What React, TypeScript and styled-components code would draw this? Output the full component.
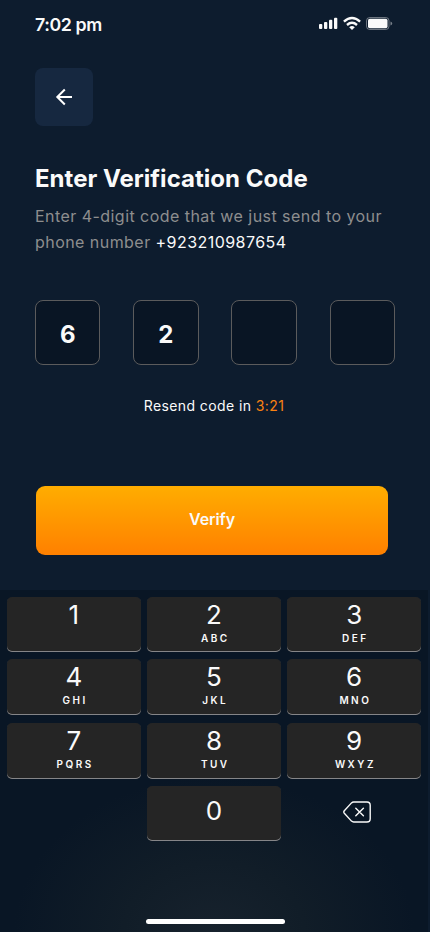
import React from 'react';
import styled, { createGlobalStyle } from 'styled-components';

const GlobalStyle = createGlobalStyle`
  * { box-sizing: border-box; }
  body { margin: 0; background: #0d1c2e; }
  button { font: inherit; color: inherit; border: 0; padding: 0; background: none; }
`;

const Screen = styled.main`
  display: flex;
  flex-direction: column;
  width: 430px;
  height: 932px;
  overflow: hidden;
  background: #0d1c2e;
  color: #fafafa;
  font-family: Inter, 'Liberation Sans', sans-serif;
`;

const StatusBar = styled.header`
  display: flex;
  justify-content: space-between;
  align-items: flex-start;
  height: 68px;
  padding: 13px 36px 0 35px;
`;

const Time = styled.time`
  font-size: 17.8px;
  line-height: 24px;
  font-weight: 600;
  letter-spacing: -0.4px;
`;

const StatusIcons = styled.svg`
  display: block;
  width: 75px;
  height: 15px;
  margin-top: 3px;
`;

const Content = styled.section`
  display: flex;
  flex-direction: column;
  height: 522px;
  padding: 0 35px;
`;

const BackButton = styled.button`
  display: grid;
  place-items: center;
  width: 58px;
  height: 58px;
  border-radius: 8px;
  background: #162840;
`;

const Title = styled.h1`
  margin: 38px 0 0;
  font-size: 24px;
  line-height: 30px;
  font-weight: 700;
  letter-spacing: 0.03px;
  white-space: nowrap;
`;

const Description = styled.p`
  margin: 9px -10px 0 0;
  font-size: 16px;
  line-height: 26px;
  font-weight: 400;
  letter-spacing: 0.45px;
  color: #8e8e8e;
`;

const Phone = styled.span`
  color: #fafafa;
`;

const CodeRow = styled.div`
  display: flex;
  justify-content: space-between;
  width: 360px;
  margin-top: 45px;
`;

const CodeCell = styled.div`
  display: grid;
  place-items: center;
  width: 65.4px;
  height: 65.4px;
  padding-top: 4px;
  border: 1px solid #5b5b5c;
  border-radius: 8px;
  background: #091524;
  font-size: 24px;
  line-height: 30px;
  font-weight: 700;
`;

const Resend = styled.p`
  margin: 30.6px 0 0 -2px;
  font-size: 14px;
  line-height: 20px;
  font-weight: 400;
  text-align: center;
  letter-spacing: 0.4px;
`;

const Countdown = styled.span`
  color: #f98112;
`;

const VerifyButton = styled.button`
  width: 352px;
  height: 69px;
  margin: 70px 0 0 1px;
  padding-bottom: 2px;
  border-radius: 9px;
  background: linear-gradient(#ffad00, #ff8000);
  font-size: 16px;
  font-weight: 600;
  letter-spacing: -0.1px;
`;

const Keyboard = styled.section`
  display: flex;
  flex-direction: column;
  justify-content: space-between;
  align-items: center;
  width: 428px;
  height: 342px;
  padding: 7px 7px 8px;
  background: radial-gradient(ellipse 200px 155px at 50% 100%, #17222d 0%, #111d28 45%, #091625 100%);
`;

const KeyGrid = styled.div`
  display: grid;
  grid-template-columns: repeat(3, 133.7px);
  grid-template-rows: 55px 56px 56px 55px;
  justify-content: space-between;
  row-gap: 7.3px;
  width: 414px;
`;

const Key = styled.button<{ $centered?: boolean }>`
  display: flex;
  flex-direction: column;
  align-items: center;
  padding-top: ${({ $centered }) => ($centered ? 9 : 2)}px;
  border-radius: 5px;
  background: #252525;
  box-shadow: inset 0 -1px 0 #858588;
`;

const Digit = styled.span`
  font-size: 26px;
  line-height: 31px;
  font-weight: 400;
`;

const Letters = styled.span`
  margin-top: 2px;
  font-size: 10px;
  line-height: 12px;
  font-weight: 600;
  letter-spacing: 2.5px;
  padding-left: 2.5px;
`;

const DeleteKey = styled.button`
  grid-column: 3;
  display: grid;
  place-items: center;
  padding: 0 0 3px 6px;
`;

const HomeIndicator = styled.div`
  width: 139px;
  height: 5px;
  margin-left: 3px;
  border-radius: 3px;
  background: #fff;
`;

const keys = [
  { digit: '1', letters: '' },
  { digit: '2', letters: 'ABC' },
  { digit: '3', letters: 'DEF' },
  { digit: '4', letters: 'GHI' },
  { digit: '5', letters: 'JKL' },
  { digit: '6', letters: 'MNO' },
  { digit: '7', letters: 'PQRS' },
  { digit: '8', letters: 'TUV' },
  { digit: '9', letters: 'WXYZ' },
];

const ZeroKey = styled(Key)`
  grid-column: 2;
`;

export default function App() {
  return (
    <>
      <GlobalStyle />
      <Screen>
        <StatusBar>
          <Time>7:02 pm</Time>
          <StatusIcons viewBox="0 0 75 15" fill="#fafafa">
            <rect x="0" y="8" width="3.3" height="5" rx="1" />
            <rect x="5" y="6" width="3.3" height="7" rx="1" />
            <rect x="10" y="3.8" width="3.3" height="9.2" rx="1" />
            <rect x="15" y="1.8" width="3.3" height="11.2" rx="1" />
            <g fill="none" stroke="#fafafa" strokeWidth="2.4">
              <path d="M24.9 5.6Q33 -1.5 41.1 5.6" />
              <path d="M28 9Q33 4.7 38 9" />
            </g>
            <path d="M30.2 11.2Q33 9 35.8 11.2L33 14Z" />
            <rect x="47.5" y="1.5" width="22.5" height="12" rx="3.3" fill="none" stroke="#fafafa" strokeOpacity=".4" />
            <rect x="49" y="2.7" width="19.5" height="9.6" rx="1.8" />
            <path d="M71.5 5.5Q73.2 6 73.2 7.5T71.5 9.5Z" opacity=".45" />
          </StatusIcons>
        </StatusBar>
        <Content>
          <BackButton aria-label="Back">
            <svg width="18" height="18" viewBox="0 0 18 18" fill="none" stroke="#fff" strokeWidth="2">
              <path d="M17 9H2.5M9.8 1.5L2.3 9L9.8 16.5" />
            </svg>
          </BackButton>
          <Title>Enter Verification Code</Title>
          <Description>
            Enter 4-digit code that we just send to your<br />
            phone number <Phone>+923210987654</Phone>
          </Description>
          <CodeRow>
            {['6', '2', '', ''].map((value, index) => (
              <CodeCell key={index}>{value}</CodeCell>
            ))}
          </CodeRow>
          <Resend>Resend code in <Countdown>3:21</Countdown></Resend>
          <VerifyButton>Verify</VerifyButton>
        </Content>
        <Keyboard>
          <KeyGrid>
            {keys.map(({ digit, letters }) => (
              <Key key={digit}>
                <Digit>{digit}</Digit>
                {letters && <Letters>{letters}</Letters>}
              </Key>
            ))}
            <ZeroKey $centered><Digit>0</Digit></ZeroKey>
            <DeleteKey aria-label="Delete">
              <svg width="28" height="22" viewBox="0 0 28 22" fill="none" stroke="#fafafa" strokeWidth="1.4" strokeLinecap="round" strokeLinejoin="round">
                <path d="M10.7 1H24Q27.2 1 27.2 4.2V17.8Q27.2 21 24 21H10.7Q9.4 21 8.5 20.1L1.3 12.3Q.3 11 1.3 9.7L8.5 1.9Q9.4 1 10.7 1ZM12.8 7.2L20.4 14.8M20.4 7.2L12.8 14.8" />
              </svg>
            </DeleteKey>
          </KeyGrid>
          <HomeIndicator />
        </Keyboard>
      </Screen>
    </>
  );
}
